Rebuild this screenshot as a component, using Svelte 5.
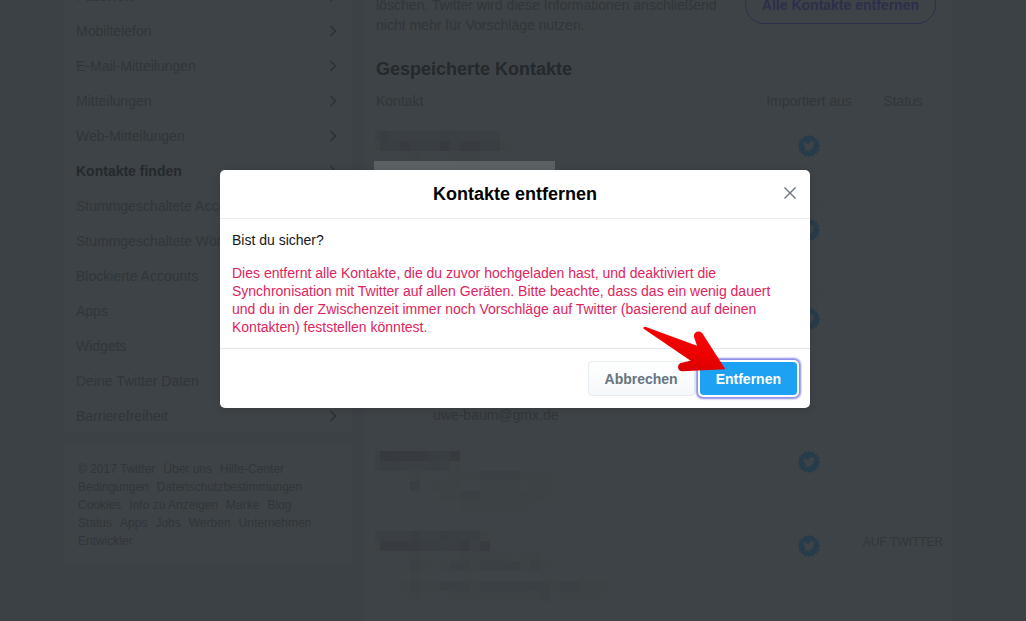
<script lang="ts">
  const menu = [
    { label: 'Passwort' },
    { label: 'Mobiltelefon' },
    { label: 'E-Mail-Mitteilungen' },
    { label: 'Mitteilungen' },
    { label: 'Web-Mitteilungen' },
    { label: 'Kontakte finden', active: true },
    { label: 'Stummgeschaltete Accounts' },
    { label: 'Stummgeschaltete Wörter' },
    { label: 'Blockierte Accounts' },
    { label: 'Apps' },
    { label: 'Widgets' },
    { label: 'Deine Twitter Daten' },
    { label: 'Barrierefreiheit' },
  ];

  const footerLinks = [
    'Über uns', 'Hilfe-Center', 'Bedingungen', 'Datenschutzbestimmungen', 'Cookies',
    'Info zu Anzeigen', 'Marke', 'Blog', 'Status', 'Apps', 'Jobs', 'Werben',
    'Unternehmen', 'Entwickler',
  ];

  // Redacted names and addresses: one digit per 10px tile, 0 is empty
  type Contact = { height: number; top?: number; tiles?: string[]; email?: string; status?: string; mask?: boolean };
  const contacts: Contact[] = [
    { height: 84, tiles: ['2422232332222', '14454446355441', '00001000111000'], mask: true },
    { height: 89 },
    { height: 143, email: 'uwe-baum@gmx.de' },
    {
      height: 84,
      top: 4,
      tiles: [
        '286665446', '233222321', '000010001112222111', '000040111001111011', '000000011221111111', '0000000001111111',
      ],
    },
    {
      height: 89,
      tiles: [
        '232242243331', '155554434525', '00001000011111011', '000021012212222121', '0000100000000000',
        '000121122212222232122111', '000010001111111112011110',
      ],
      status: 'AUF TWITTER',
    },
    { height: 84 },
  ];

  // Scalloped outline of the source badge
  const badge = Array.from({ length: 128 }, (_, i) => {
    const a = (i / 128) * Math.PI * 2;
    const r = 10.4 + 0.6 * Math.cos(a * 16);
    return `${(11 + r * Math.sin(a)).toFixed(2)},${(11 - r * Math.cos(a)).toFixed(2)}`;
  }).join(' ');

  let open = $state(true);
</script>

<div class="viewport">
  <div class="page">
    <aside>
      <nav class="card menu">
        {#each menu as item}
          <a href="#settings" class:active={item.active}>
            {item.label}
            <svg width="8" height="12" viewBox="0 0 8 12"><path d="M1.5 1l5 5-5 5" /></svg>
          </a>
        {/each}
      </nav>
      <footer class="card links">
        <span>© 2017 Twitter</span>
        {#each footerLinks as link}
          <a href="#about">{link}</a>
        {/each}
      </footer>
    </aside>

    <main class="card">
      <section class="intro">
        <p>löschen. Twitter wird diese Informationen anschließend nicht mehr für Vorschläge nutzen.</p>
        <button class="remove-all" onclick={() => (open = true)}>Alle Kontakte entfernen</button>
      </section>
      <section class="saved">
        <h2>Gespeicherte Kontakte</h2>
        <table>
          <thead>
            <tr><th class="contact">Kontakt</th><th class="source">Importiert aus</th><th class="status">Status</th></tr>
          </thead>
          <tbody>
            {#each contacts as contact}
              <tr style="height: {contact.height}px">
                <td class="contact">
                  {#if contact.tiles}
                    <svg class="mosaic" width="260" height="70" viewBox="0 0 260 70" aria-hidden="true">
                      {#each contact.tiles as row, y}
                        {#each row as tile, x}
                          {#if tile !== '0'}
                            <rect
                              x={x === 0 ? 5 : x * 10}
                              y={y * 10 + (contact.top ?? 0)}
                              width={x === 0 ? 5 : 10}
                              height="10"
                              fill-opacity={Number(tile) * 0.06}
                            />
                          {/if}
                        {/each}
                      {/each}
                      {#if contact.mask}
                        <rect class="mask" x="4" y="30" width="181" height="20" />
                      {/if}
                    </svg>
                  {/if}
                  {#if contact.email}<p class="email">{contact.email}</p>{/if}
                </td>
                <td class="source">
                  <svg class="badge" width="22" height="22" viewBox="0 0 22 22" role="img" aria-label="Twitter">
                    <polygon points={badge} />
                    <path
                      transform="translate(5 5) scale(.5)"
                      d="M23.953 4.57a10 10 0 01-2.825.775 4.958 4.958 0 002.163-2.723c-.951.555-2.005.959-3.127 1.184a4.92 4.92 0 00-8.384 4.482C7.69 8.095 4.067 6.13 1.64 3.162a4.822 4.822 0 00-.666 2.475c0 1.71.87 3.213 2.188 4.096a4.904 4.904 0 01-2.228-.616v.06a4.923 4.923 0 003.946 4.827 4.996 4.996 0 01-2.212.085 4.936 4.936 0 004.604 3.417 9.867 9.867 0 01-6.102 2.105c-.39 0-.779-.023-1.17-.067a13.995 13.995 0 007.557 2.209c9.053 0 13.998-7.496 13.998-13.985 0-.21 0-.42-.015-.63A9.935 9.935 0 0024 4.59z"
                    />
                  </svg>
                </td>
                <td class="status">{contact.status ?? ''}</td>
              </tr>
            {/each}
          </tbody>
        </table>
      </section>
    </main>
  </div>

  {#if open}
    <div class="overlay">
      <div class="modal" role="dialog" aria-modal="true" aria-labelledby="modal-title">
        <header>
          <h3 id="modal-title">Kontakte entfernen</h3>
          <button class="close" aria-label="Schließen" onclick={() => (open = false)}>
            <svg width="12" height="12" viewBox="0 0 12 12"><path d="M.5.5l11 11M11.5.5l-11 11" /></svg>
          </button>
        </header>
        <div class="body">
          <p>Bist du sicher?</p>
          <p class="warning">
            Dies entfernt alle Kontakte, die du zuvor hochgeladen hast, und deaktiviert die Synchronisation mit
            Twitter auf allen Geräten. Bitte beachte, dass das ein wenig dauert und du in der Zwischenzeit immer noch
            Vorschläge auf Twitter (basierend auf deinen Kontakten) feststellen könntest.
          </p>
        </div>
        <div class="actions">
          <button class="btn" onclick={() => (open = false)}>Abbrechen</button>
          <button class="btn primary" onclick={() => (open = false)}>Entfernen</button>
        </div>
        <svg class="arrow" width="84" height="48" viewBox="186 45 252 144" aria-hidden="true">
          <defs>
            <linearGradient id="arrow-fill" x1="0" y1="1" x2="0.6" y2="0">
              <stop offset="0" stop-color="#c80000" />
              <stop offset="0.6" stop-color="#ee0000" />
              <stop offset="1" stop-color="#fa0808" />
            </linearGradient>
          </defs>
          <path
            fill="url(#arrow-fill)"
            d="M196 50L351 107L343 84C337 66 357 58 367 70L436 178L308 184C290 184 290 160 305 158L332 152L191 56Q188 50 196 50Z"
          />
        </svg>
      </div>
    </div>
  {/if}
</div>

<style>
  :global(body) {
    margin: 0;
    background: #3c4145;
  }

  .viewport {
    height: 100vh;
    overflow: hidden;
    position: relative;
    font: 14px/20px 'Liberation Sans', Arial, sans-serif;
    color: #30363a;
  }

  .page {
    display: grid;
    grid-template-columns: 288px minmax(0, 1fr);
    gap: 12px;
    align-items: start;
    max-width: 888px;
    margin: -22px auto 0;
    padding-right: 10px;
  }

  .card {
    background: #3e4347;
  }

  p,
  h2,
  h3 {
    margin: 0;
  }

  button {
    font: inherit;
    cursor: pointer;
  }

  a {
    color: inherit;
    text-decoration: none;
  }

  .menu a {
    display: flex;
    align-items: center;
    justify-content: space-between;
    box-sizing: border-box;
    height: 35px;
    padding: 0 15px 0 12px;
    border-top: 1px solid #3c4145;
  }

  .menu .active {
    font-weight: bold;
    color: #24292d;
  }

  .menu svg {
    fill: none;
    stroke: #2a3034;
    stroke-width: 1.3;
  }

  .links {
    display: flex;
    flex-wrap: wrap;
    column-gap: 8px;
    margin-top: 12px;
    padding: 15px 24px 15px 14px;
    font-size: 12px;
    line-height: 18px;
  }

  .intro {
    display: flex;
    align-items: flex-start;
    justify-content: space-between;
    padding: 8px 16px 8px 12px;
  }

  .intro p {
    flex: 1;
    padding: 9px 20px 0 0;
  }

  .remove-all {
    height: 38px;
    padding: 0 16px;
    border: 1px solid #2b2f4c;
    border-radius: 19px;
    background: none;
    color: #2b2f4c;
    font-weight: bold;
  }

  .saved {
    border-top: 1px solid #3c4145;
    padding-top: 13px;
  }

  h2 {
    padding-left: 12px;
    font-size: 18px;
    line-height: 24px;
    color: #24292d;
  }

  table {
    width: 100%;
    border-collapse: separate;
    border-spacing: 0;
    table-layout: fixed;
  }

  th {
    padding: 10px 0 9px;
    font-weight: normal;
  }

  td {
    box-sizing: border-box;
    padding: 10px 0 0;
    border-top: 1px solid #3c4145;
    vertical-align: top;
  }

  th.contact {
    padding-left: 12px;
    text-align: left;
  }

  td.contact {
    padding-left: 6px;
  }

  .source {
    width: 90px;
    text-align: center;
  }

  .status {
    width: 98px;
    text-align: center;
  }

  td.status {
    font-size: 12px;
    line-height: 22px;
  }

  .mosaic {
    display: block;
    height: 70px;
    fill: #2b3036;
  }

  .mask {
    fill: #5b6063;
  }

  .email {
    padding: 101px 0 0 63px;
  }

  .badge {
    display: block;
    margin: 4px auto 0;
    fill: #263c4a;
  }

  .badge path {
    fill: #3e4347;
  }

  .overlay {
    position: absolute;
    inset: 0;
    display: flex;
    align-items: flex-start;
    justify-content: center;
    padding: 170px 0 0 4px;
  }

  .modal {
    position: relative;
    width: 590px;
    border-radius: 5px;
    background: #fff;
    color: #14171a;
    box-shadow: 0 2px 8px rgba(0, 0, 0, 0.12);
  }

  header {
    display: grid;
    grid-template-columns: 44px 1fr 44px;
    align-items: center;
    height: 48px;
    border-bottom: 1px solid #e6ebee;
  }

  h3 {
    grid-column: 2;
    text-align: center;
    font-size: 18px;
    line-height: 24px;
    color: #000;
  }

  .close {
    display: grid;
    place-items: center;
    height: 40px;
    padding: 0 0 2px 4px;
    border: 0;
    background: none;
  }

  .close svg {
    fill: none;
    stroke: #66757f;
    stroke-width: 1.4;
  }

  .body {
    padding: 12px 32px 12px 12px;
    line-height: 18px;
  }

  .warning {
    margin-top: 15px;
    color: #e0245e;
  }

  .actions {
    display: flex;
    justify-content: flex-end;
    gap: 4px;
    padding: 12px;
    border-top: 1px solid #e1e8ed;
  }

  .btn {
    height: 35px;
    padding: 0 16px;
    border: 1px solid #e6ecf0;
    border-radius: 4px;
    background: linear-gradient(#fff, #f5f8fa);
    color: #66757f;
    font-weight: bold;
  }

  .primary {
    border-color: #fff;
    background: #1da1f2 padding-box;
    color: #fff;
    box-shadow: 0 0 0 1px #fff, 0 0 2px 3px #8d8be8;
  }

  .arrow {
    position: absolute;
    right: 84px;
    bottom: 35px;
  }
</style>
